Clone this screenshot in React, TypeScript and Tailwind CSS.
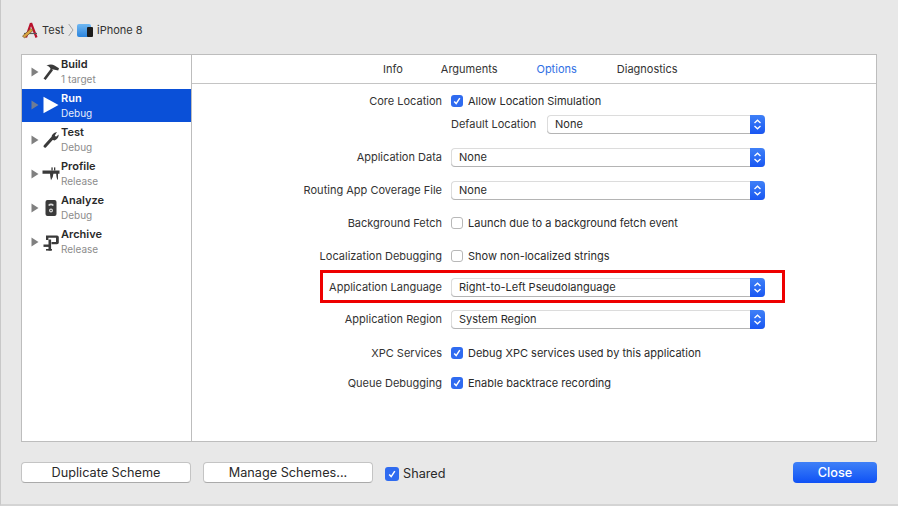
import React from "react";

const F = { fontFamily: "Inter, 'Noto Sans', sans-serif" };

function Tri({ selected }: { selected?: boolean }) {
  return (
    <svg width="8" height="10" viewBox="0 0 8 10" className="shrink-0">
      <path d="M0.5 0.5 L7.5 5 L0.5 9.5 Z" fill={selected ? "#6f7c94" : "#808080"} />
    </svg>
  );
}

const icons: Record<string, React.ReactNode> = {
  Build: (
    <svg width="18" height="18" viewBox="0 0 18 18">
      <path d="M1.5 15.5 L9 5.6 L11 7.2 L3.6 17 Z" fill="#3a3a3a" />
      <path d="M4.5 2.8 Q9 0.4 12.5 2.6 L17 5.2 L16.2 7.4 L11.5 6.4 L9 6.6 L7.8 4.4 Q6.8 3.2 4.5 2.8 Z" fill="#3a3a3a" />
    </svg>
  ),
  Run: (
    <svg width="16" height="18" viewBox="0 0 16 18">
      <path d="M0.5 0.8 L15.5 9 L0.5 17.2 Z" fill="#ffffff" />
    </svg>
  ),
  Test: (
    <svg width="18" height="18" viewBox="0 0 18 18">
      <path d="M3 15.2 L10 7.5" stroke="#3a3a3a" strokeWidth="3" strokeLinecap="round" />
      <path d="M9.6 8.5 Q8.6 3.8 12.6 1.8 L15 1 L12.8 4.4 L14 5.8 L16.8 3.6 Q16.4 8 12.5 9.4 Z" fill="#3a3a3a" />
    </svg>
  ),
  Profile: (
    <svg width="18" height="18" viewBox="0 0 18 18">
      <path d="M0.5 5.5 H17.5 V8.8 H16 V15 Q14.4 14 14.2 8.8 H11.4 Q11.2 12.6 9 15.2 Q8.2 12 8 8.8 H0.5 Z" fill="#3a3a3a" />
      <rect x="9.4" y="2.4" width="1.3" height="3.1" fill="#3a3a3a" />
      <rect x="12" y="2.4" width="1.3" height="3.1" fill="#3a3a3a" />
    </svg>
  ),
  Analyze: (
    <svg width="18" height="18" viewBox="0 0 18 18">
      <rect x="3.5" y="1" width="11" height="16" rx="2" fill="#3a3a3a" />
      <path d="M6 6 Q9 3.2 12 6 L10.7 6.9 Q9 5.5 7.3 6.9 Z" fill="#d8d8d8" />
      <circle cx="9" cy="11.5" r="2" fill="#d8d8d8" />
      <circle cx="9" cy="11.5" r="0.8" fill="#3a3a3a" />
    </svg>
  ),
  Archive: (
    <svg width="18" height="18" viewBox="0 0 18 18">
      <path d="M4 2.5 H15 Q16.8 2.5 16.8 4.2 V9.8 Q16.8 11.2 15 11.2 H9.5 V9 H14 V4.8 H6.4 V7 H4 Z" fill="#3a3a3a" />
      <rect x="6.5" y="6.5" width="2.6" height="11" fill="#3a3a3a" />
      <rect x="1.5" y="11.5" width="7" height="2.4" fill="#3a3a3a" />
      <rect x="4" y="16" width="6" height="1.6" fill="#3a3a3a" />
    </svg>
  ),
};

function SchemeRow({ name, sub, selected }: { name: string; sub: string; selected?: boolean }) {
  return (
    <div className={`flex items-center pl-[9px] pb-[1px] ${selected ? "h-[33px] mb-[1px] bg-[#0a50d8]" : "h-[34px]"}`}>
      <Tri selected={selected} />
      <div className="w-[18px] ml-[3px] flex justify-center shrink-0">{icons[name]}</div>
      <div className="ml-[1px] flex flex-col">
        <span className={`text-[11px] leading-[15px] font-semibold ${selected ? "text-white" : "text-[#2a2a2a]"}`}>{name}</span>
        <span className={`text-[10px] leading-[14px] ${selected ? "text-[#e6edfb]" : "text-[#8c8c8c]"}`}>{sub}</span>
      </div>
    </div>
  );
}

function Check({ size = "small" }: { size?: "small" | "big" }) {
  const cls = size === "big" ? "w-[14px] h-[14px]" : "w-[12px] h-[12px]";
  return (
    <span className={`${cls} shrink-0 rounded-[3px] bg-[#2f6bf0] flex items-center justify-center`}>
      <svg width="10" height="10" viewBox="0 0 10 10">
        <path d="M2.2 5.4 L4.2 7.6 L7.8 2.2" fill="none" stroke="#ffffff" strokeWidth="1.5" />
      </svg>
    </span>
  );
}

function Select({ value, w }: { value: string; w: string }) {
  return (
    <div className={`${w} h-[18px] flex rounded-[4px] bg-white border-t border-l border-[#dcdcdc] shadow-[0_1px_0_#b4b4b4]`}>
      <span className="flex-1 pl-[7px] text-[11px] leading-[17px] text-[#2a2a2a]">{value}</span>
      <span className="w-[15px] -mt-px -mb-px rounded-r-[4px] bg-gradient-to-b from-[#3f80f7] to-[#1a56f2] flex items-center justify-center">
        <svg width="9" height="13" viewBox="0 0 9 13">
          <path d="M1.5 5 L4.5 2.2 L7.5 5 M1.5 8 L4.5 10.8 L7.5 8" fill="none" stroke="#ffffff" strokeWidth="1.3" />
        </svg>
      </span>
    </div>
  );
}

function Row({ label, className, children }: { label: string; className: string; children: React.ReactNode }) {
  return (
    <div className={`flex items-center ${className}`}>
      <div className="w-[259px] pr-[9px] text-right text-[11px] text-[#333333] whitespace-nowrap">{label}</div>
      {children}
    </div>
  );
}

function CheckLabel({ text }: { text: string }) {
  return (
    <div className="flex items-center gap-[5px]">
      <Check />
      <span className="text-[11px] text-[#2a2a2a] whitespace-nowrap">{text}</span>
    </div>
  );
}

function EmptyCheckLabel({ text }: { text: string }) {
  return (
    <div className="flex items-center gap-[5px]">
      <span className="w-[12px] h-[12px] shrink-0 rounded-[3px] bg-white border border-[#b8b8b8]" />
      <span className="text-[11px] text-[#2a2a2a] whitespace-nowrap">{text}</span>
    </div>
  );
}

function PushButton({ children, className = "" }: { children: React.ReactNode; className?: string }) {
  return (
    <button className={`w-[170px] h-[21px] rounded-[4px] bg-white border border-[#c4c4c4] border-b-[#aaaaaa] text-[12.7px] leading-[18px] text-[#2a2a2a] ${className}`}>
      {children}
    </button>
  );
}

export default function App() {
  return (
    <div style={F} className="relative w-[898px] h-[506px] overflow-hidden bg-[#e8e8e8] border-l border-[#c8c8c8] border-b-2 border-b-[#d4d4d4]">
      {/* breadcrumb */}
      <div className="h-[54px] pl-[21px] pt-[22px] flex items-start">
        <svg width="17" height="17" viewBox="0 0 17 17" className="shrink-0">
          <path d="M9 1 L4 15.5 M9 1 L14.5 15.5" stroke="#b8122c" strokeWidth="2.2" fill="none" />
          <path d="M2 11.5 H15" stroke="#5a5a5a" strokeWidth="1.2" />
          <path d="M0.5 14 L9 6.5 L11 8.5 L2.5 16 Z" fill="#d9a441" stroke="#5e4520" strokeWidth="0.6" />
        </svg>
        <span className="ml-[3px] text-[11px] leading-[16px] text-[#333333]">Test</span>
        <svg width="6" height="14" viewBox="0 0 6 14" className="ml-[4px] mt-[1px]">
          <path d="M0.7 1 L5 7 L0.7 13" fill="none" stroke="#9a9a9a" strokeWidth="0.9" />
        </svg>
        <span className="relative ml-[3px] w-[14px] h-[13px] mt-[2px] rounded-[2px] bg-gradient-to-b from-[#6fb8f2] to-[#2a83dc]">
          <span className="absolute right-[-2px] top-[3px] w-[6px] h-[10px] rounded-[1px] bg-[#1c1c1c]" />
        </span>
        <span className="ml-[6px] text-[11px] leading-[16px] text-[#333333]">iPhone 8</span>
      </div>

      {/* main panel */}
      <div className="ml-[20px] w-[856px] h-[388px] flex bg-white border border-[#bdbdbd]">
        <div className="w-[170px] shrink-0 border-r border-[#bdbdbd]">
          <SchemeRow name="Build" sub="1 target" />
          <SchemeRow name="Run" sub="Debug" selected />
          <SchemeRow name="Test" sub="Debug" />
          <SchemeRow name="Profile" sub="Release" />
          <SchemeRow name="Analyze" sub="Debug" />
          <SchemeRow name="Archive" sub="Release" />
        </div>
        <div className="flex-1 min-w-0">
          <div className="h-[29px] border-b border-[#c4c4c4] flex items-center text-[11px] text-[#333333]">
            <span className="ml-[191px]">Info</span>
            <span className="ml-[38px]">Arguments</span>
            <span className="ml-[39px] text-[#2f6fe4]">Options</span>
            <span className="ml-[40px]">Diagnostics</span>
          </div>
          <div className="pt-[6px]">
            <Row label="Core Location" className="h-[22px]">
              <CheckLabel text="Allow Location Simulation" />
            </Row>
            <div className="flex items-center h-[22px] mt-[1px] pl-[259px]">
              <span className="w-[96px] text-[11px] text-[#333333]">Default Location</span>
              <Select value="None" w="w-[218px]" />
            </div>
            <Row label="Application Data" className="h-[22px] mt-[11px]">
              <Select value="None" w="w-[314px]" />
            </Row>
            <Row label="Routing App Coverage File" className="h-[22px] mt-[11px]">
              <Select value="None" w="w-[314px]" />
            </Row>
            <Row label="Background Fetch" className="h-[22px] mt-[11px]">
              <EmptyCheckLabel text="Launch due to a background fetch event" />
            </Row>
            <Row label="Localization Debugging" className="h-[22px] mt-[11px]">
              <EmptyCheckLabel text="Show non-localized strings" />
            </Row>
            <Row label="Application Language" className="h-[22px] mt-[9px]">
              <Select value="Right-to-Left Pseudolanguage" w="w-[314px]" />
            </Row>
            <Row label="Application Region" className="h-[22px] mt-[10px]">
              <Select value="System Region" w="w-[314px]" />
            </Row>
            <Row label="XPC Services" className="h-[22px] mt-[12px]">
              <CheckLabel text="Debug XPC services used by this application" />
            </Row>
            <Row label="Queue Debugging" className="h-[22px] mt-[8px]">
              <CheckLabel text="Enable backtrace recording" />
            </Row>
          </div>
        </div>
      </div>

      {/* footer */}
      <div className="ml-[20px] w-[856px] mt-[20px] h-[21px] flex items-center">
        <PushButton>Duplicate Scheme</PushButton>
        <PushButton className="ml-[12px]">Manage Schemes...</PushButton>
        <div className="ml-[12px] mt-[2px] flex items-center gap-[4px]">
          <Check size="big" />
          <span className="text-[12.7px] text-[#2a2a2a]">Shared</span>
        </div>
        <button className="ml-auto w-[84px] h-[21px] rounded-[4px] bg-gradient-to-b from-[#3f80f7] to-[#0f50f5] text-white text-[12.7px] font-medium">
          Close
        </button>
      </div>

      {/* annotation */}
      <div className="absolute left-[319px] top-[270px] w-[465px] h-[33px] border-[3px] border-[#ee0000] pointer-events-none" />
    </div>
  );
}
